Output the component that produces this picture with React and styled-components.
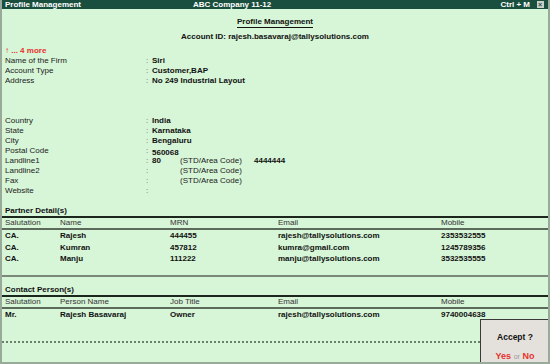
import React from 'react';
import styled, {createGlobalStyle} from 'styled-components';

const GlobalStyle = createGlobalStyle`
    body {
        margin: 0;
        font-family: "Liberation Sans", Arial, sans-serif;
    }
`;

const Frame = styled.div`
    position: relative;
    width: 550px;
    height: 364px;
    box-sizing: border-box;
    background: #d7f5d7;
    border-left: 2px solid #9aaa9a;
    border-right: 2px solid #9aaa9a;
    border-bottom: 2px solid #9aaa9a;
    display: flex;
    flex-direction: column;
    overflow: hidden;
    font-size: 8px;
    color: #222;
`;

const TitleBar = styled.div`
    margin: 0 -2px;
    height: 9px;
    background: #1a4e3e;
    color: #fff;
    font-weight: bold;
    font-size: 8px;
    line-height: 9px;
    display: grid;
    grid-template-columns: 188px 1fr auto 20px;
    padding-left: 5px;
`;

const CloseBox = styled.span`
    justify-self: center;
    width: 7px;
    height: 7px;
    margin-top: 1px;
    background: #c8d0c8;
    color: #1a4e3e;
    font-size: 7px;
    line-height: 7px;
    text-align: center;
`;

const Heading = styled.div`
    margin-top: 8px;
    text-align: center;
    span {
        display: inline-block;
        font-weight: bold;
        line-height: 10px;
        color: #111;
        border-bottom: 1px solid #111;
    }
`;

const AccountLine = styled.div`
    margin-top: 4px;
    text-align: center;
    font-weight: bold;
    line-height: 10px;
    color: #111;
`;

const More = styled.div`
    margin-top: 4px;
    padding-left: 3px;
    line-height: 10px;
    font-weight: bold;
    color: #e8322c;
`;

const Fields = styled.div`
    padding-left: 3px;
`;

const FieldRow = styled.div`
    display: grid;
    grid-template-columns: 141px 6px 28px 74px 1fr;
    height: 10px;
    line-height: 10px;
`;

const Colon = styled.span`
    color: #666;
`;

const Value = styled.span`
    font-weight: bold;
    color: #111;
    grid-column: ${p => p.$span ? '3 / -1' : 'auto'};
    position: relative;
    top: ${p => p.$low ? '2px' : '0'};
`;

const SectionTitle = styled.div`
    margin-top: ${p => p.$gap}px;
    padding-left: 3px;
    line-height: 10px;
    font-weight: bold;
    color: #111;
`;

const ruleColors = {
    thick: '#1d261d',
    dotted: '#5c6a5c',
    gray: '#7a897a',
    dash: '#6f7f6f',
};

const Rule = styled.div`
    flex-shrink: 0;
    height: 0;
    border-top: 2px ${p => p.$kind === 'dash' ? 'dotted' : 'solid'} ${p => ruleColors[p.$kind]};
    margin-top: ${p => p.$gap || 0}px;
`;

const TableRow = styled.div`
    display: grid;
    grid-template-columns: 55px 110px 108px 163px 1fr;
    padding-left: 3px;
    height: ${p => p.$head ? 10 : 11.5}px;
    line-height: ${p => p.$head ? 10 : 11.5}px;
    font-weight: ${p => p.$head ? 'normal' : 'bold'};
    color: ${p => p.$head ? '#333' : '#111'};
`;

const Dialog = styled.div`
    position: absolute;
    right: -2px;
    bottom: -2px;
    width: 70px;
    height: 45px;
    box-sizing: border-box;
    background: #e4e1dd;
    border: 1px solid #3a3a3a;
    display: flex;
    flex-direction: column;
    align-items: center;
    justify-content: space-between;
    padding: 12px 0 2px;
`;

const Ask = styled.div`
    font-weight: bold;
    font-size: 8.5px;
    color: #111;
`;

const Answer = styled.div`
    font-weight: bold;
    font-size: 9px;
    color: #e8322c;
    span {
        font-weight: normal;
        font-size: 7px;
        color: #9a9a9a;
    }
`;

const partners = [
    ['CA.', 'Rajesh', '444455', 'rajesh@tallysolutions.com', '2353532555'],
    ['CA.', 'Kumran', '457812', 'kumra@gmail.com', '1245789356'],
    ['CA.', 'Manju', '111222', 'manju@tallysolutions.com', '3532535555'],
];

const fields = [
    ['Name of the Firm', 'Siri'],
    ['Account Type', 'Customer,BAP'],
    ['Address', 'No 249 Industrial Layout'],
    [null],
    [null],
    [null],
    ['Country', 'India'],
    ['State', 'Karnataka'],
    ['City', 'Bengaluru'],
];

function App() {
    return (
        <>
            <GlobalStyle />
            <Frame>
                <TitleBar>
                    <span>Profile Management</span>
                    <span>ABC Company 11-12</span>
                    <span>Ctrl + M</span>
                    <CloseBox>×</CloseBox>
                </TitleBar>
                <Heading><span>Profile Management</span></Heading>
                <AccountLine>Account ID: rajesh.basavaraj@tallysolutions.com</AccountLine>
                <More>↑ ... 4 more</More>
                <Fields>
                    {fields.map(([label, value], i) => (
                        label ? (
                            <FieldRow key={i}>
                                <span>{label}</span>
                                <Colon>:</Colon>
                                <Value $span>{value}</Value>
                            </FieldRow>
                        ) : <FieldRow key={i} />
                    ))}
                    <FieldRow>
                        <span>Postal Code</span>
                        <Colon>:</Colon>
                        <Value $span $low>560068</Value>
                    </FieldRow>
                    <FieldRow>
                        <span>Landline1</span>
                        <Colon>:</Colon>
                        <Value>80</Value>
                        <span>(STD/Area Code)</span>
                        <Value>4444444</Value>
                    </FieldRow>
                    <FieldRow>
                        <span>Landline2</span>
                        <Colon>:</Colon>
                        <span />
                        <span>(STD/Area Code)</span>
                    </FieldRow>
                    <FieldRow>
                        <span>Fax</span>
                        <Colon>:</Colon>
                        <span />
                        <span>(STD/Area Code)</span>
                    </FieldRow>
                    <FieldRow>
                        <span>Website</span>
                        <Colon>:</Colon>
                    </FieldRow>
                </Fields>

                <SectionTitle $gap={10}>Partner Detail(s)</SectionTitle>
                <Rule $kind="thick" />
                <TableRow $head>
                    <span>Salutation</span>
                    <span>Name</span>
                    <span>MRN</span>
                    <span>Email</span>
                    <span>Mobile</span>
                </TableRow>
                <Rule $kind="dotted" />
                {partners.map((row, i) => (
                    <TableRow key={i}>
                        {row.map((cell, j) => <span key={j}>{cell}</span>)}
                    </TableRow>
                ))}
                <Rule $kind="gray" $gap={10} />

                <SectionTitle $gap={8}>Contact Person(s)</SectionTitle>
                <Rule $kind="thick" />
                <TableRow $head>
                    <span>Salutation</span>
                    <span>Person Name</span>
                    <span>Job Title</span>
                    <span>Email</span>
                    <span>Mobile</span>
                </TableRow>
                <Rule $kind="dotted" />
                <TableRow>
                    <span>Mr.</span>
                    <span>Rajesh Basavaraj</span>
                    <span>Owner</span>
                    <span>rajesh@tallysolutions.com</span>
                    <span>9740004638</span>
                </TableRow>
                <Rule $kind="dash" $gap={21} />

                <Dialog>
                    <Ask>Accept ?</Ask>
                    <Answer>Yes <span>or</span> No</Answer>
                </Dialog>
            </Frame>
        </>
    );
}

export default App;
